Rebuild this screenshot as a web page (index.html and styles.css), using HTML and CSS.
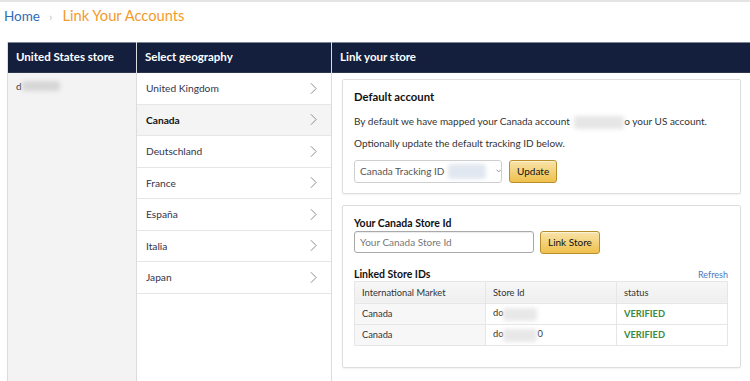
FILE: index.html
```html
<!DOCTYPE html>
<html lang="en">
<head>
    <meta charset="UTF-8">
    <title>Link Your Accounts</title>
    <link rel="stylesheet" href="styles.css">
</head>
<body>
<div class="topline"></div>
<div class="breadcrumb">
    <a class="crumb-home" href="#">Home</a>
    <span class="crumb-sep">›</span>
    <span class="crumb-current">Link Your Accounts</span>
</div>

<div class="columns">
    <div class="col col-store">
        <div class="col-head">United States store</div>
        <div class="store-id">d<span class="blur blur-store"></span></div>
    </div>

    <div class="col col-geo">
        <div class="col-head">Select geography</div>
        <ul class="geo-list">
            <li class="geo-item">United Kingdom <svg class="chev" viewBox="0 0 8 14"><polyline points="1,1 7,7 1,13"/></svg></li>
            <li class="geo-item active">Canada <svg class="chev" viewBox="0 0 8 14"><polyline points="1,1 7,7 1,13"/></svg></li>
            <li class="geo-item">Deutschland <svg class="chev" viewBox="0 0 8 14"><polyline points="1,1 7,7 1,13"/></svg></li>
            <li class="geo-item">France <svg class="chev" viewBox="0 0 8 14"><polyline points="1,1 7,7 1,13"/></svg></li>
            <li class="geo-item">España <svg class="chev" viewBox="0 0 8 14"><polyline points="1,1 7,7 1,13"/></svg></li>
            <li class="geo-item">Italia <svg class="chev" viewBox="0 0 8 14"><polyline points="1,1 7,7 1,13"/></svg></li>
            <li class="geo-item">Japan <svg class="chev" viewBox="0 0 8 14"><polyline points="1,1 7,7 1,13"/></svg></li>
        </ul>
    </div>

    <div class="col col-link">
        <div class="col-head">Link your store</div>

        <div class="box box-default">
            <h2 class="box-title">Default account</h2>
            <p class="box-text">By default we have mapped your Canada account <span class="blur blur-account"></span>o your US account.</p>
            <p class="box-text">Optionally update the default tracking ID below.</p>
            <div class="form-row">
                <div class="select">
                    <span>Canada Tracking ID</span>
                    <span class="blur blur-tracking"></span>
                    <svg class="select-arrow" viewBox="0 0 6 4"><polyline points="0.5,0.5 3,3 5.5,0.5"/></svg>
                </div>
                <button class="btn">Update</button>
            </div>
        </div>

        <div class="box box-store">
            <h3 class="field-label">Your Canada Store Id</h3>
            <div class="form-row">
                <input class="text-input" type="text" placeholder="Your Canada Store Id">
                <button class="btn btn-link">Link Store</button>
            </div>

            <div class="linked-head">
                <h3 class="field-label">Linked Store IDs</h3>
                <a class="refresh" href="#">Refresh</a>
            </div>
            <table class="linked-table">
                <thead>
                    <tr><th>International Market</th><th>Store Id</th><th>status</th></tr>
                </thead>
                <tbody>
                    <tr><td>Canada</td><td>do<span class="blur blur-cell"></span></td><td class="verified">VERIFIED</td></tr>
                    <tr><td>Canada</td><td>do<span class="blur blur-cell"></span>0</td><td class="verified">VERIFIED</td></tr>
                </tbody>
            </table>
        </div>
    </div>
</div>
</body>
</html>
```

FILE: styles.css
```css
* {
    box-sizing: border-box;
    margin: 0;
    padding: 0;
}

body {
    font-family: Lato, "Open Sans", Arial, sans-serif;
    color: #222;
    background: #fff;
    overflow: hidden;
}

.topline {
    height: 2px;
    background: #e4e4e4;
}

.breadcrumb {
    height: 40px;
    padding: 4px 0 0 4px;
    display: flex;
    align-items: baseline;
}

.crumb-home {
    color: #2f6cb5;
    text-decoration: none;
    font-size: 13.5px;
}

.crumb-sep {
    color: #c4c4c4;
    font-size: 12px;
    margin: 0 10px 0 9px;
}

.crumb-current {
    color: #f39b2c;
    font-size: 14.7px;
}

.columns {
    display: grid;
    grid-template-columns: 129px 195px 1fr;
    margin-left: 7px;
    border-left: 1px solid #dcdcdc;
    min-height: 345px;
}

.col {
    border-right: 1px solid #dcdcdc;
}

.col:last-child {
    border-right: none;
}

.col-head {
    height: 31px;
    background: #141f3e;
    border-top: 1px solid #7d8496;
    border-bottom: 1px solid #2b3550;
    color: #fff;
    font-weight: 700;
    font-size: 11.5px;
    display: flex;
    align-items: center;
    padding: 0 0 2px 8px;
}

.col-store {
    background: #f3f3f3;
}

.store-id {
    font-size: 10px;
    padding: 7px 0 0 8px;
    color: #333;
    display: flex;
    align-items: center;
}

.blur {
    display: inline-block;
    background: #e2e2e2;
    filter: blur(2px);
    border-radius: 3px;
}

.blur-store {
    width: 38px;
    height: 10px;
    background: #d6d6d6;
}

.col-geo {
    background: #fff;
}

.geo-list {
    list-style: none;
}

.geo-item {
    height: 31.5px;
    border-bottom: 1px solid #e6e6e6;
    display: flex;
    align-items: center;
    justify-content: space-between;
    padding: 0 14px 0 9px;
    font-size: 10.2px;
    color: #34344a;
}

.geo-item.active {
    background: #f4f4f4;
    font-weight: 700;
    color: #111;
}

.chev {
    width: 7px;
    height: 13px;
    fill: none;
    stroke: #888;
    stroke-width: 1.1;
}

.col-link {
    padding-bottom: 14px;
}

.box {
    margin: 6px 9px 0 10px;
    border: 1px solid #dedede;
    border-radius: 2px;
    box-shadow: 0 1px 2px rgba(0, 0, 0, 0.06);
    padding: 10px 12px 10px 11px;
}

.box-title {
    font-size: 11.3px;
    line-height: 14px;
    font-weight: 700;
    color: #111;
    margin-bottom: 10px;
}

.box-text {
    font-size: 10px;
    color: #333;
    line-height: 14px;
    margin-bottom: 7px;
    white-space: nowrap;
}

.blur-account {
    width: 50px;
    height: 13px;
    margin: 0 0 0 2px;
    vertical-align: middle;
    background: #e6e6e6;
}

.form-row {
    display: flex;
    gap: 7px;
    align-items: center;
}

.box-default .form-row {
    margin-top: 10px;
}

.select {
    width: 148px;
    height: 23px;
    border: 1px solid #cfcfcf;
    border-radius: 3px;
    display: flex;
    align-items: center;
    padding-left: 5px;
    font-size: 10px;
    color: #555;
    gap: 4px;
    white-space: nowrap;
}

.blur-tracking {
    width: 42px;
    height: 15px;
    background: #e1e7f0;
}

.select-arrow {
    width: 6px;
    height: 4px;
    margin-left: 6px;
    fill: none;
    stroke: #888;
    stroke-width: 1;
}

.btn {
    height: 23px;
    padding: 0 7px;
    border: 1px solid #b7902d;
    border-radius: 3px;
    background: linear-gradient(to bottom, #f8e3a9, #efc04c);
    box-shadow: inset 0 1px 0 rgba(255, 255, 255, 0.5);
    font-family: inherit;
    font-size: 10px;
    color: #111;
}

.btn-link {
    padding: 0 7px;
}

.box-store {
    margin-top: 11px;
    padding-top: 10px;
    padding-bottom: 21px;
}

.field-label {
    font-size: 10.5px;
    line-height: 14px;
    font-weight: 700;
    color: #111;
    margin-bottom: 1px;
}

.text-input {
    width: 180px;
    height: 22px;
    border: 1px solid #a9a9a9;
    border-radius: 3px;
    box-shadow: inset 0 1px 1px rgba(0, 0, 0, 0.08);
    padding-left: 5px;
    font-family: inherit;
    font-size: 10px;
}

.text-input::placeholder {
    color: #777;
}

.box-store .form-row {
    gap: 6px;
}

.linked-head {
    display: flex;
    justify-content: space-between;
    align-items: flex-end;
    margin-top: 13px;
}

.linked-head .field-label {
    margin-bottom: 0;
}

.refresh {
    font-size: 9px;
    color: #4a78c2;
    text-decoration: none;
    margin-bottom: 1px;
}

.linked-table {
    width: 100%;
    border-collapse: collapse;
    border: 1px solid #e3e3e3;
    font-size: 9.3px;
    color: #333;
}

.linked-table th,
.linked-table td {
    text-align: left;
    height: 21px;
    padding: 0 7px;
    border: 1px solid #e6e6e6;
}

.linked-table th {
    font-weight: 400;
    background: linear-gradient(to bottom, #f7f7f7, #efefef);
    height: 22px;
}

.linked-table th:first-child,
.linked-table td:first-child {
    width: 131px;
}

.linked-table th:nth-child(2),
.linked-table td:nth-child(2) {
    width: 131px;
}

.linked-table td:first-child {
    background: #f7f7f7;
}

.blur-cell {
    width: 34px;
    height: 13px;
    vertical-align: middle;
    background: #e8e8e8;
}

.verified {
    color: #3a8a3f;
    font-weight: 700;
}
```
